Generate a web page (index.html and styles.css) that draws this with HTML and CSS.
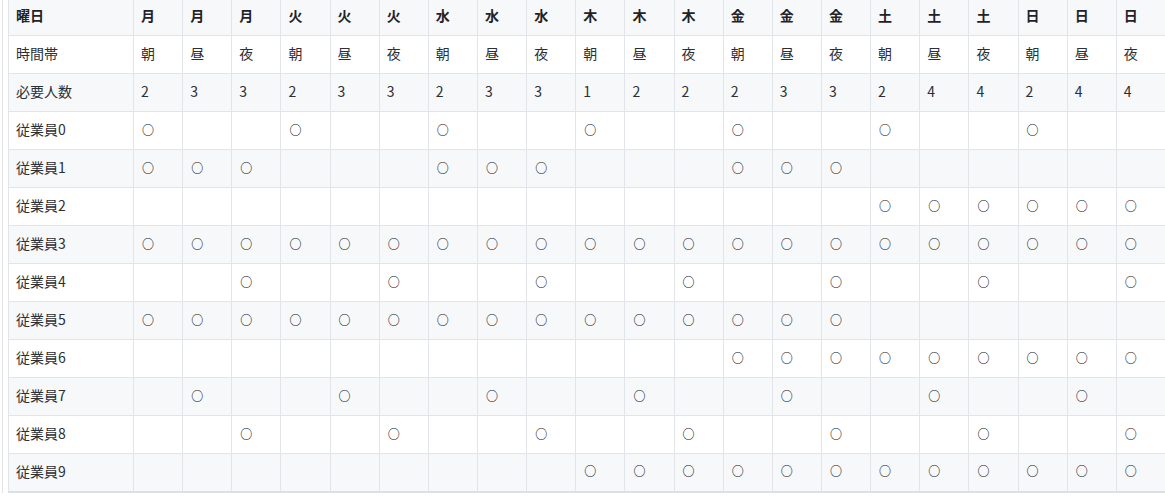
FILE: index.html
```html
<!DOCTYPE html>
<html lang="ja">
<head>
<meta charset="utf-8">
<link rel="stylesheet" href="styles.css">
</head>
<body>
<div class="frame">
<table class="shift">
<colgroup><col class="c-label"></colgroup>
<thead>
<tr><th>曜日</th><th>月</th><th>月</th><th>月</th><th>火</th><th>火</th><th>火</th><th>水</th><th>水</th><th>水</th><th>木</th><th>木</th><th>木</th><th>金</th><th>金</th><th>金</th><th>土</th><th>土</th><th>土</th><th>日</th><th>日</th><th>日</th></tr>
</thead>
<tbody>
<tr><td>時間帯</td><td>朝</td><td>昼</td><td>夜</td><td>朝</td><td>昼</td><td>夜</td><td>朝</td><td>昼</td><td>夜</td><td>朝</td><td>昼</td><td>夜</td><td>朝</td><td>昼</td><td>夜</td><td>朝</td><td>昼</td><td>夜</td><td>朝</td><td>昼</td><td>夜</td></tr>
<tr><td>必要人数</td><td>2</td><td>3</td><td>3</td><td>2</td><td>3</td><td>3</td><td>2</td><td>3</td><td>3</td><td>1</td><td>2</td><td>2</td><td>2</td><td>3</td><td>3</td><td>2</td><td>4</td><td>4</td><td>2</td><td>4</td><td>4</td></tr>
<tr><td>従業員0</td><td class="on">○</td><td></td><td></td><td class="on">○</td><td></td><td></td><td class="on">○</td><td></td><td></td><td class="on">○</td><td></td><td></td><td class="on">○</td><td></td><td></td><td class="on">○</td><td></td><td></td><td class="on">○</td><td></td><td></td></tr>
<tr><td>従業員1</td><td class="on">○</td><td class="on">○</td><td class="on">○</td><td></td><td></td><td></td><td class="on">○</td><td class="on">○</td><td class="on">○</td><td></td><td></td><td></td><td class="on">○</td><td class="on">○</td><td class="on">○</td><td></td><td></td><td></td><td></td><td></td><td></td></tr>
<tr><td>従業員2</td><td></td><td></td><td></td><td></td><td></td><td></td><td></td><td></td><td></td><td></td><td></td><td></td><td></td><td></td><td></td><td class="on">○</td><td class="on">○</td><td class="on">○</td><td class="on">○</td><td class="on">○</td><td class="on">○</td></tr>
<tr><td>従業員3</td><td class="on">○</td><td class="on">○</td><td class="on">○</td><td class="on">○</td><td class="on">○</td><td class="on">○</td><td class="on">○</td><td class="on">○</td><td class="on">○</td><td class="on">○</td><td class="on">○</td><td class="on">○</td><td class="on">○</td><td class="on">○</td><td class="on">○</td><td class="on">○</td><td class="on">○</td><td class="on">○</td><td class="on">○</td><td class="on">○</td><td class="on">○</td></tr>
<tr><td>従業員4</td><td></td><td></td><td class="on">○</td><td></td><td></td><td class="on">○</td><td></td><td></td><td class="on">○</td><td></td><td></td><td class="on">○</td><td></td><td></td><td class="on">○</td><td></td><td></td><td class="on">○</td><td></td><td></td><td class="on">○</td></tr>
<tr><td>従業員5</td><td class="on">○</td><td class="on">○</td><td class="on">○</td><td class="on">○</td><td class="on">○</td><td class="on">○</td><td class="on">○</td><td class="on">○</td><td class="on">○</td><td class="on">○</td><td class="on">○</td><td class="on">○</td><td class="on">○</td><td class="on">○</td><td class="on">○</td><td></td><td></td><td></td><td></td><td></td><td></td></tr>
<tr><td>従業員6</td><td></td><td></td><td></td><td></td><td></td><td></td><td></td><td></td><td></td><td></td><td></td><td></td><td class="on">○</td><td class="on">○</td><td class="on">○</td><td class="on">○</td><td class="on">○</td><td class="on">○</td><td class="on">○</td><td class="on">○</td><td class="on">○</td></tr>
<tr><td>従業員7</td><td></td><td class="on">○</td><td></td><td></td><td class="on">○</td><td></td><td></td><td class="on">○</td><td></td><td></td><td class="on">○</td><td></td><td></td><td class="on">○</td><td></td><td></td><td class="on">○</td><td></td><td></td><td class="on">○</td><td></td></tr>
<tr><td>従業員8</td><td></td><td></td><td class="on">○</td><td></td><td></td><td class="on">○</td><td></td><td></td><td class="on">○</td><td></td><td></td><td class="on">○</td><td></td><td></td><td class="on">○</td><td></td><td></td><td class="on">○</td><td></td><td></td><td class="on">○</td></tr>
<tr><td>従業員9</td><td></td><td></td><td></td><td></td><td></td><td></td><td></td><td></td><td></td><td class="on">○</td><td class="on">○</td><td class="on">○</td><td class="on">○</td><td class="on">○</td><td class="on">○</td><td class="on">○</td><td class="on">○</td><td class="on">○</td><td class="on">○</td><td class="on">○</td><td class="on">○</td></tr>
</tbody>
</table>
</div>
</body>
</html>
```

FILE: styles.css
```css
html, body {
  margin: 0;
  padding: 0;
  background: #ffffff;
  overflow: hidden;
}
body {
  font-family: "Noto Sans CJK JP", "Noto Sans", sans-serif;
  font-size: 14px;
  color: #24292f;
}
.frame {
  margin-left: 2px;
  padding-left: 5px;
  border-left: 1px solid #e3e3e3;
  height: 493px;
  overflow: hidden;
}
.shift {
  border-collapse: collapse;
  table-layout: fixed;
  width: 1158px;
  margin-top: -3px;
  border-bottom: 2px solid #dcdfe3;
}
.c-label {
  width: 125px;
}
.shift th,
.shift td {
  height: 38px;
  padding: 0 7px 3px 7px;
  border: 1px solid #e1e4e8;
  text-align: left;
  vertical-align: middle;
  white-space: nowrap;
  overflow: hidden;
  box-sizing: border-box;
  line-height: 20px;
}
.shift th {
  font-weight: 700;
  color: #1f2328;
}
.shift td {
  font-weight: 400;
  color: #2b2f36;
}
.shift td.on {
  font-size: 12px;
  padding-left: 8px;
  padding-bottom: 2px;
  color: #111418;
  font-weight: 700;
}
.shift thead tr {
  background: #f6f8fa;
}
.shift tbody tr:nth-child(even) {
  background: #f6f8fa;
}
.shift tbody tr:nth-child(odd) {
  background: #ffffff;
}
```
